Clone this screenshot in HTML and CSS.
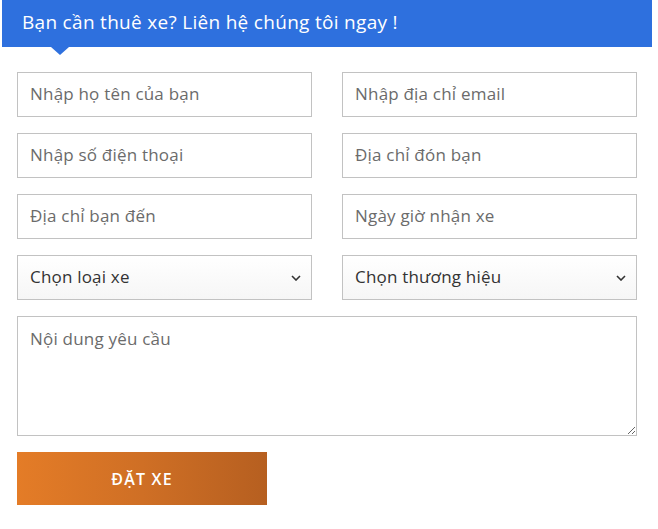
FILE: index.html
```html
<!DOCTYPE html>
<html lang="vi">
<head>
<meta charset="utf-8">
<link rel="stylesheet" href="styles.css">
</head>
<body>
<div class="box">
  <div class="head">
    <h2 class="title">Bạn cần thuê xe? Liên hệ chúng tôi ngay !</h2>
  </div>
  <form class="form">
    <div class="grid">
      <input class="field" type="text" placeholder="Nhập họ tên của bạn">
      <input class="field" type="text" placeholder="Nhập địa chỉ email">
      <input class="field" type="text" placeholder="Nhập số điện thoại">
      <input class="field" type="text" placeholder="Địa chỉ đón bạn">
      <input class="field" type="text" placeholder="Địa chỉ bạn đến">
      <input class="field" type="text" placeholder="Ngày giờ nhận xe">
      <div class="sel">
        <select class="field select"><option>Chọn loại xe</option></select>
        <svg class="chev" width="10" height="6" viewBox="0 0 10 6"><path d="M1 1l4 4 4-4" fill="none" stroke="#333" stroke-width="1.6"/></svg>
      </div>
      <div class="sel">
        <select class="field select"><option>Chọn thương hiệu</option></select>
        <svg class="chev" width="10" height="6" viewBox="0 0 10 6"><path d="M1 1l4 4 4-4" fill="none" stroke="#333" stroke-width="1.6"/></svg>
      </div>
      <textarea class="field area" placeholder="Nội dung yêu cầu"></textarea>
    </div>
    <button class="btn" type="button">ĐẶT XE</button>
  </form>
</div>
</body>
</html>
```
FILE: styles.css
```css
* { box-sizing: border-box; }
body { margin: 0; background: #fff; font-family: "Open Sans", "Noto Sans", sans-serif; }
.box { margin-left: 2px; width: 650px; }
.head { position: relative; background: #2e70de; height: 47px; display: flex; align-items: center; padding-left: 20px; padding-bottom: 3px; }
.head::after { content: ""; position: absolute; left: 49px; top: 47px; border-left: 9px solid transparent; border-right: 9px solid transparent; border-top: 8px solid #2e70de; }
.title { margin: 0; color: #fff; font-weight: 400; font-size: 19px; letter-spacing: 0.3px; }
.form { padding: 25px 15px 0 15px; }
.grid { display: grid; grid-template-columns: 295px 295px; column-gap: 30px; row-gap: 16px; }
.field { height: 45px; width: 100%; border: 1px solid #c2c2c2; background: #fff; font-family: "Open Sans", "Noto Sans", sans-serif; font-size: 17px; letter-spacing: 0.2px; color: #333; padding: 0 12px 2px; outline: none; border-radius: 0; }
.field::placeholder { color: #6b6b6b; }
.sel { position: relative; }
.select { appearance: none; -webkit-appearance: none; background: linear-gradient(#fff, #f6f6f6); color: #333; }
.chev { position: absolute; right: 11px; top: 20px; pointer-events: none; }
.area { grid-column: 1 / 3; height: 120px; padding-top: 10px; resize: vertical; }
.btn { margin-top: 16px; width: 250px; height: 53px; border: 0; background: linear-gradient(90deg, #e47c27, #cf6f25 50%, #b65f20); color: #fff; font-family: "Open Sans", "Noto Sans", sans-serif; font-weight: 600; font-size: 16px; letter-spacing: 1.2px; display: block; }
```
